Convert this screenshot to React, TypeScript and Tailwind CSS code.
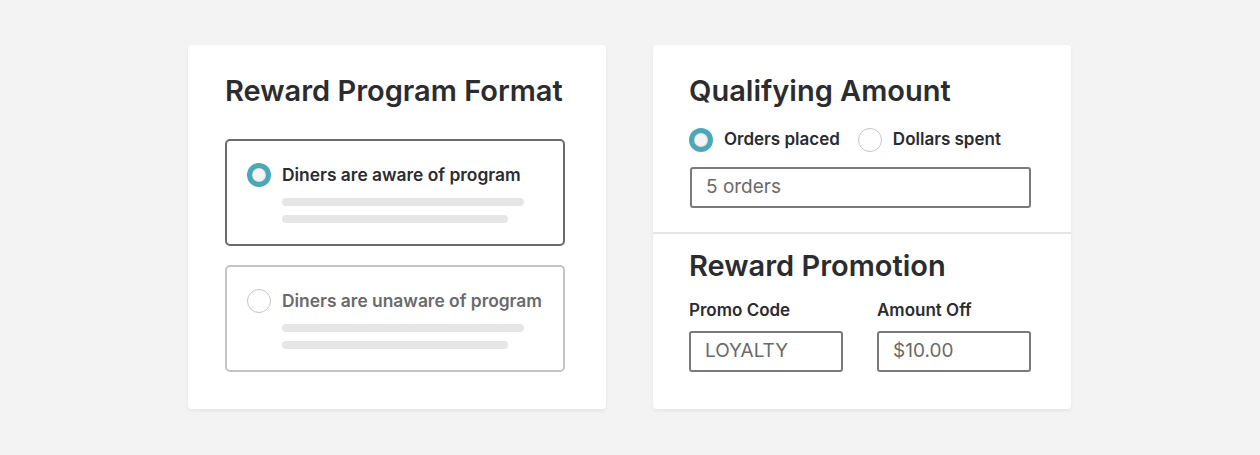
import React from 'react'

const font = { fontFamily: 'Inter, "Open Sans", sans-serif' }

function Radio({ checked }: { checked: boolean }) {
  if (checked) {
    return (
      <span className="flex h-6 w-6 shrink-0 items-center justify-center rounded-full bg-[#4aa9b8]">
        <span className="block h-[14px] w-[14px] rounded-full bg-[#f4f4f4] shadow-[inset_0_0_2px_rgba(0,0,0,0.25)]" />
      </span>
    )
  }
  return <span className="block h-6 w-6 shrink-0 rounded-full border-[1.5px] border-[#c4c4c4] bg-white" />
}

function FormatOption({ label, selected }: { label: string; selected: boolean }) {
  return (
    <div
      className={`h-[107px] w-[340px] rounded-[5px] border-2 px-5 pt-[21px] ${
        selected ? 'border-[#6b6b6b]' : 'border-[#c4c4c4]'
      }`}
    >
      <div className="flex items-center gap-[11px]">
        <Radio checked={selected} />
        <span className={`text-[17.4px] font-semibold ${selected ? 'text-[#2a2c30]' : 'text-[#6a6a6a]'}`}>
          {label}
        </span>
      </div>
      <div className="ml-[35px] mt-[10px] flex flex-col gap-[9px]">
        <div className="h-2 w-[242px] rounded-full bg-[#e6e6e6]" />
        <div className="h-2 w-[226px] rounded-full bg-[#e6e6e6]" />
      </div>
    </div>
  )
}

function TextBox({ value, className }: { value: string; className: string }) {
  return (
    <div
      className={`flex h-[41px] items-center rounded-[3px] border-2 border-[#7a7a7a] px-[14px] text-[19px] text-[#6a6a6a] ${className}`}
    >
      {value}
    </div>
  )
}

export default function App() {
  return (
    <div className="flex h-[455px] w-[1260px] items-start gap-[47px] bg-[#f3f3f3] pl-[188px] pt-[45px]" style={font}>
      <div className="h-[364px] w-[418px] rounded-[4px] bg-white px-[37px] pt-[28px] shadow-[0_2px_4px_rgba(0,0,0,0.06)]">
        <h2 className="text-[29px] font-semibold leading-9 text-[#2a2c30]">Reward Program Format</h2>
        <div className="mt-[30px] flex flex-col gap-[19px]">
          <FormatOption label="Diners are aware of program" selected />
          <FormatOption label="Diners are unaware of program" selected={false} />
        </div>
      </div>

      <div className="h-[364px] w-[418px] rounded-[4px] bg-white shadow-[0_2px_4px_rgba(0,0,0,0.06)]">
        <div className="border-b-2 border-[#e6e6e6] px-9 pb-6 pt-[28px]">
          <h2 className="text-[29px] font-semibold leading-9 text-[#2a2c30]">Qualifying Amount</h2>
          <div className="mt-[18px] flex items-center">
            <Radio checked />
            <span className="ml-[11px] text-[17px] font-semibold text-[#2a2c30]">Orders placed</span>
            <span className="ml-[18px] flex">
              <Radio checked={false} />
            </span>
            <span className="ml-[11px] text-[17px] font-semibold text-[#2a2c30]">Dollars spent</span>
          </div>
          <TextBox value="5 orders" className="mt-[14px] ml-px w-[341px]" />
        </div>
        <div className="px-9 pt-[14px]">
          <h2 className="text-[29px] font-semibold leading-9 text-[#2a2c30]">Reward Promotion</h2>
          <div className="mt-[14px] flex gap-[34px]">
            <div>
              <div className="text-[17px] font-semibold text-[#2a2c30]">Promo Code</div>
              <TextBox value="LOYALTY" className="mt-[8px] w-[154px]" />
            </div>
            <div>
              <div className="text-[17px] font-semibold text-[#2a2c30]">Amount Off</div>
              <TextBox value="$10.00" className="mt-[8px] w-[154px]" />
            </div>
          </div>
        </div>
      </div>
    </div>
  )
}
